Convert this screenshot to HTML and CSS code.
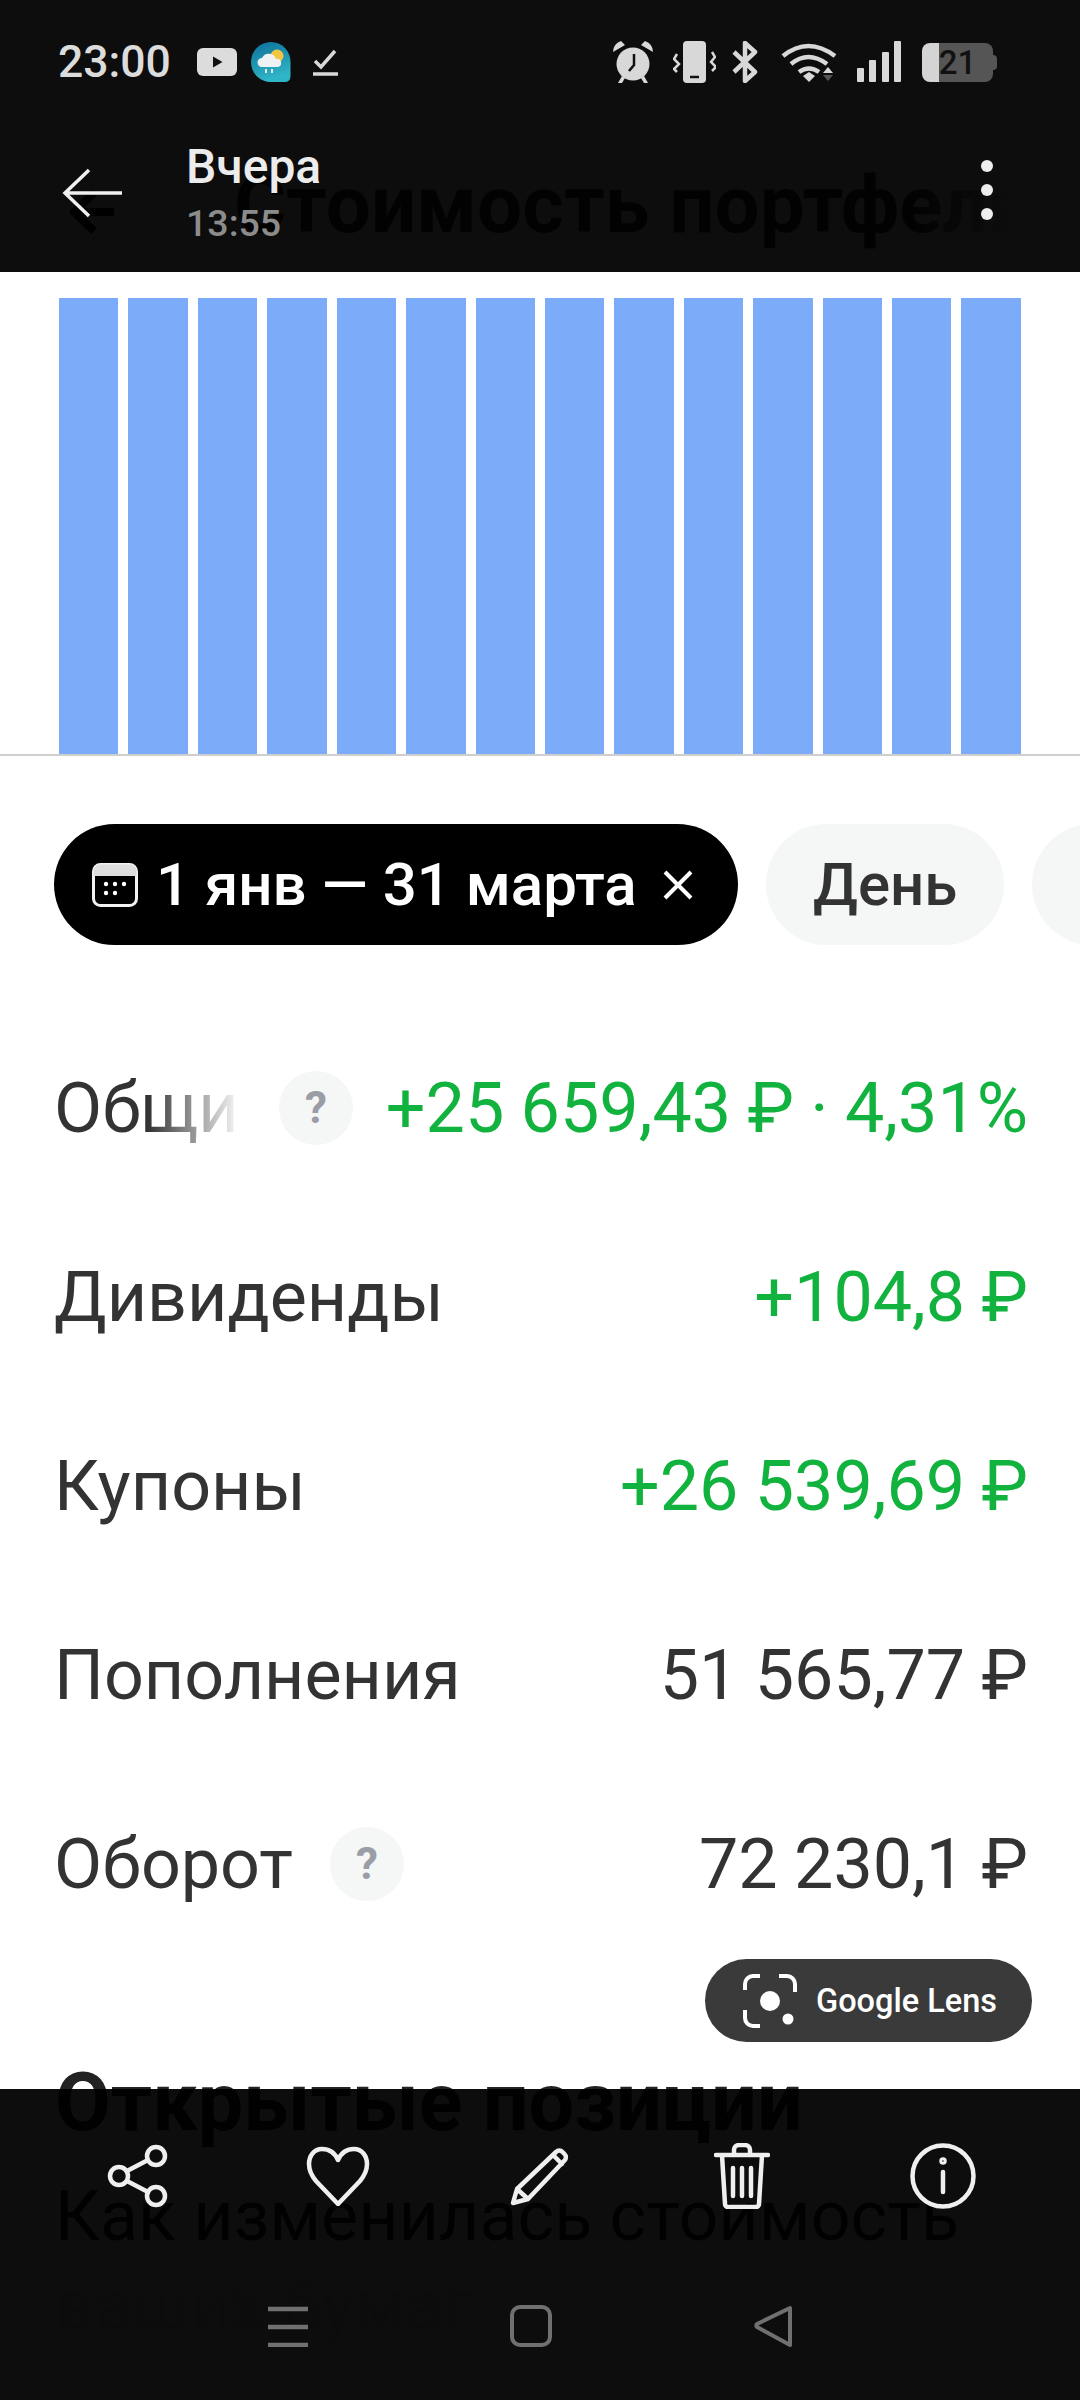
FILE: index.html
```html
<!DOCTYPE html>
<html lang="ru">

<head>
    <meta charset="UTF-8" />
    <meta name="viewport" content="width=device-width, initial-scale=1.0" />
    <title>Стоимость портфеля</title>
    <link rel="stylesheet" href="styles.css">
</head>

<body>
    <div class="screen">
        <main class="page">
            <div class="page-head">
                <svg class="page-back" viewBox="0 0 44 44">
                    <path d="M24 3 4 22l20 19M4 22h40" />
                </svg>
                <h1 class="page-title">Стоимость портфеля</h1>
            </div>

            <div class="chart">
                <div class="bar"></div><div class="bar"></div><div class="bar"></div><div class="bar"></div>
                <div class="bar"></div><div class="bar"></div><div class="bar"></div><div class="bar"></div>
                <div class="bar"></div><div class="bar"></div><div class="bar"></div><div class="bar"></div>
                <div class="bar"></div><div class="bar"></div>
            </div>

            <div class="chips">
                <div class="chip chip-active">
                    <svg class="chip-calendar" viewBox="0 0 46 44">
                        <rect x="1.5" y="1.5" width="43" height="41" rx="7" class="cal-frame" />
                        <path d="M1.5 13V8.5a7 7 0 0 1 7-7h29a7 7 0 0 1 7 7V13z" class="cal-top" />
                        <circle cx="14" cy="21" r="2.2" /><circle cx="23" cy="21" r="2.2" /><circle cx="32" cy="21" r="2.2" />
                        <circle cx="14" cy="30" r="2.2" /><circle cx="23" cy="30" r="2.2" />
                    </svg>
                    <span>1 янв — 31 марта</span>
                    <svg class="chip-close" viewBox="0 0 30 30">
                        <path d="M2 2l26 26M28 2 2 28" />
                    </svg>
                </div>
                <div class="chip">День</div>
                <div class="chip">Неделя</div>
            </div>

            <section class="rows">
                <div class="row">
                    <span class="row-label row-label-fade">Общий результат</span>
                    <span class="help">?</span>
                    <span class="row-value plus">+25 659,43 ₽ · 4,31%</span>
                </div>
                <div class="row">
                    <span class="row-label">Дивиденды</span>
                    <span class="row-value plus">+104,8 ₽</span>
                </div>
                <div class="row">
                    <span class="row-label">Купоны</span>
                    <span class="row-value plus">+26 539,69 ₽</span>
                </div>
                <div class="row">
                    <span class="row-label">Пополнения</span>
                    <span class="row-value">51 565,77 ₽</span>
                </div>
                <div class="row">
                    <span class="row-label">Оборот</span>
                    <span class="help">?</span>
                    <span class="row-value">72 230,1 ₽</span>
                </div>
            </section>

            <h2 class="section-title">Открытые позиции</h2>
            <p class="section-text">Как изменилась стоимость</p>
            <p class="section-text section-text-faint">ваших бумаг</p>
        </main>

        <!-- gallery viewer controls sit on top of the page -->
        <header class="top-bar">
            <div class="status-bar">
                <span class="status-time">23:00</span>
                <svg class="ic-yt" viewBox="0 0 40 28">
                    <rect width="40" height="28" rx="6" fill="#dcdcdc" />
                    <path d="M16 8.500v11l9.500-5.500z" fill="#111" />
                </svg>
                <svg class="ic-weather" viewBox="0 0 40 40">
                    <defs>
                        <linearGradient id="drop" x1="0" y1="0" x2="0.3" y2="1">
                            <stop offset="0" stop-color="#0c6f9a" />
                            <stop offset="1" stop-color="#2fb6c6" />
                        </linearGradient>
                    </defs>
                    <path d="M20 0a19.500 20 0 0 1 19.500 20v14q0 6-6 6H20A20 20 0 0 1 20 0z" fill="url(#drop)" />
                    <circle cx="26" cy="14" r="6.500" fill="#f4c542" />
                    <path d="M11 25a4.500 4.500 0 0 1 0-9 7.500 7.500 0 0 1 14 1 4 4 0 0 1 2 8z" fill="#eef2f4" />
                    <path d="M15 27v4M21 27v4" stroke="#dfe8ec" stroke-width="2" />
                </svg>
                <svg class="ic-check" viewBox="0 0 25 27">
                    <path d="M2 12l6 6L22 2" />
                    <path d="M0 25h25" />
                </svg>

                <div class="status-right">
                    <svg class="ic-alarm" viewBox="0 0 42 42">
                        <circle cx="21" cy="23" r="16.500" fill="#d8d8d8" />
                        <path d="M1 11Q1 3 9 0l4 4zM41 11q0-8-8-11l-4 4zM6 42l4-7 3 2-3 5zM36 42l-4-7-3 2 3 5z" fill="#d8d8d8" />
                        <path d="M22 13v11l-5 6" fill="none" stroke="#111" stroke-width="2.500" />
                    </svg>
                    <svg class="ic-vibrate" viewBox="0 0 43 42">
                        <rect x="10" y="0" width="23" height="42" rx="4" fill="#d8d8d8" />
                        <path d="M17 36h9" stroke="#111" stroke-width="2.500" />
                        <path d="M4 13 1 18l5 5-5 5 3 3M39 11l3 5-4 5 5 5-4 4" fill="none" stroke="#d8d8d8" stroke-width="2.500" />
                    </svg>
                    <svg class="ic-bt" viewBox="0 0 26 42">
                        <path d="M2 11l21 20-10 9V2l10 9L2 31" fill="none" stroke="#d8d8d8" stroke-width="4.500" stroke-linejoin="round" />
                    </svg>
                    <svg class="ic-wifi" viewBox="0 0 56 42">
                        <path d="M2 15q25-20 52 0M10 23q17-14 36 0M18 31q10-7 20 0" fill="none" stroke="#d8d8d8" stroke-width="4.500" />
                        <path d="M22 35l6-4 6 4-6 6z" fill="#d8d8d8" />
                        <path d="M47 26l5 6H42z" fill="#d8d8d8" />
                        <path d="M42 34h10l-5 6z" fill="#555" />
                    </svg>
                    <svg class="ic-signal" viewBox="0 0 44 42">
                        <rect x="0" y="27" width="7" height="14" rx="1" fill="#d8d8d8" />
                        <rect x="12" y="19" width="7" height="22" rx="1" fill="#d8d8d8" />
                        <rect x="25" y="11" width="7" height="30" rx="1" fill="#d8d8d8" />
                        <rect x="37" y="0" width="7" height="41" rx="1" fill="#d8d8d8" />
                    </svg>
                    <div class="battery">
                        <span class="battery-level">21</span>
                    </div>
                </div>
            </div>
            <div class="app-bar">
                <svg class="ic-back" viewBox="0 0 62 50">
                    <path d="M27 2 3 25l24 23M3 25h57" />
                </svg>
                <div class="app-title">
                    <div class="app-date">Вчера</div>
                    <div class="app-time">13:55</div>
                </div>
                <div class="dots"><i></i><i></i><i></i></div>
            </div>
        </header>

        <div class="lens">
            <svg class="lens-icon" viewBox="0 0 54 54">
                <path d="M2 16V10a8 8 0 0 1 8-8h7M36 2h8a8 8 0 0 1 8 8v8M2 36v8a8 8 0 0 0 8 8h7" />
                <circle cx="27" cy="27" r="10" class="lens-fill" />
                <circle cx="45" cy="45" r="5.500" class="lens-fill" />
            </svg>
            <span>Google Lens</span>
        </div>

        <footer class="bottom-bar">
            <div class="actions">
                <svg class="action" width="64" height="64" viewBox="0 0 64 64">
                    <circle cx="51" cy="12" r="9" /><circle cx="14" cy="32" r="9" /><circle cx="51" cy="52" r="9" />
                    <path d="M22 27l21-11M22 37l21 11" />
                </svg>
                <svg class="action" width="64" height="60" viewBox="0 0 64 60">
                    <path d="M32 14C28 5 21 3 16 3 8 3 3 10 3 18c0 6 2 11 7 17l22 23 22-23c5-6 7-11 7-17 0-8-5-15-13-15-5 0-12 2-16 11z" />
                </svg>
                <svg class="action" width="60" height="60" viewBox="0 0 60 60">
                    <path d="M3 57l4-14L46 6a4.500 4.500 0 0 1 6.500 0l2 2a4.500 4.500 0 0 1 0 6.500L18 53zM7 43l11 10M43 9l9 9" />
                </svg>
                <svg class="action" width="56" height="66" viewBox="0 0 56 66">
                    <path d="M2 12h52M20 11V7a5 5 0 0 1 5-5h6a5 5 0 0 1 5 5v4M8 12l3 49a3 3 0 0 0 3 3h28a3 3 0 0 0 3-3l3-49M19 25v28M28 25v28M37 25v28" />
                </svg>
                <svg class="action" width="66" height="66" viewBox="0 0 66 66">
                    <circle cx="33" cy="33" r="30.500" />
                    <path d="M33 29v20" />
                    <circle cx="33" cy="18" r="1.500" />
                </svg>
            </div>
            <nav class="nav-keys">
                <svg class="nav-key nav-menu" width="42" height="42" viewBox="0 0 42 42">
                    <path d="M1 4h40M1 22h40M1 40h40" />
                </svg>
                <svg class="nav-key" width="42" height="42" viewBox="0 0 42 42">
                    <rect x="2" y="2" width="38" height="38" rx="8" />
                </svg>
                <svg class="nav-key" width="42" height="42" viewBox="0 0 42 42">
                    <path d="M37 3 4 19a2 2 0 0 0 0 3l33 18z" stroke-linejoin="round" />
                </svg>
            </nav>
        </footer>
    </div>
</body>

</html>
```

FILE: styles.css
```css
* {
    box-sizing: border-box;
}

body {
    margin: 0;
    background-color: #fff;
    font-family: "Roboto", "Noto Sans", sans-serif;
}

.screen {
    position: relative;
    width: 1080px;
    height: 2400px;
    overflow: hidden;
    background-color: #fff;
}

/* page content */
.page-head {
    display: flex;
    align-items: flex-end;
    height: 298px;
    padding: 0 0 48px 70px;
    white-space: nowrap;
}

.page-back {
    width: 44px;
    height: 44px;
    margin-bottom: 16px;
    fill: none;
    stroke: #000;
    stroke-width: 8;
}

.page-title {
    flex: none;
    margin: 0 0 0 120px;
    font-size: 80px;
    line-height: 90px;
    font-weight: 700;
    color: #333;
    -webkit-mask-image: linear-gradient(to right, #000 85%, transparent 98%);
    mask-image: linear-gradient(to right, #000 85%, transparent 98%);
}

.chart {
    display: flex;
    gap: 10px;
    height: 458px;
    padding: 0 59px;
    border-bottom: 2px solid #cfcfcf;
}

.bar {
    flex: 1;
    background-color: #7cabf9;
}

.chips {
    display: flex;
    gap: 28px;
    margin-top: 68px;
    padding-left: 54px;
    white-space: nowrap;
}

.chip {
    flex: none;
    display: flex;
    align-items: center;
    height: 121px;
    padding: 0 47px;
    border-radius: 61px;
    background-color: #f5f6f6;
    color: #333;
    font-size: 60px;
    font-weight: 500;
}

.chip-active {
    gap: 18px;
    width: 684px;
    padding: 0 0 0 38px;
    background-color: #000;
    color: #fff;
}

.chip-calendar {
    flex: none;
    width: 46px;
    height: 44px;
    fill: #fff;
}

.cal-frame {
    fill: #000;
    stroke: #f2f2f2;
    stroke-width: 3;
}

.cal-top {
    fill: #dedede;
}

.chip-close {
    flex: none;
    width: 30px;
    height: 30px;
    margin-left: 8px;
    fill: none;
    stroke: #fff;
    stroke-width: 4;
}

.rows {
    margin-top: 68px;
    padding: 0 52px 0 54px;
}

.row {
    display: flex;
    align-items: center;
    height: 189px;
    font-size: 70px;
    color: #333;
    white-space: nowrap;
}

.row-label {
    flex: 0 1 auto;
    min-width: 0;
    overflow: hidden;
}

.row-label-fade {
    -webkit-mask-image: linear-gradient(to right, #000 50%, transparent 100%);
    mask-image: linear-gradient(to right, #000 50%, transparent 100%);
}

.help {
    flex: none;
    width: 74px;
    height: 74px;
    margin-left: 37px;
    border-radius: 50%;
    background-color: #f5f6f6;
    color: #9a9ca6;
    font-size: 44px;
    font-weight: 700;
    line-height: 74px;
    text-align: center;
}

.row-value {
    flex: none;
    margin-left: auto;
    padding-left: 33px;
    word-spacing: -1px;
}

.plus {
    color: #12b23f;
}

.section-title {
    margin: 100px 0 0;
    padding-left: 55px;
    font-size: 81px;
    line-height: 90px;
    font-weight: 700;
    color: #222;
    white-space: nowrap;
}

.section-text {
    margin: 28px 0 0;
    padding-left: 55px;
    font-size: 70px;
    line-height: 80px;
    color: #222;
    white-space: nowrap;
}

.section-text-faint {
    margin-top: 10px;
    color: #e2e2e2;
}

/* dark viewer chrome, the page shows through a little */
.top-bar,
.bottom-bar {
    position: absolute;
    left: 0;
    width: 100%;
    background-color: rgba(0, 0, 0, 0.95);
}

.top-bar {
    top: 0;
    height: 272px;
}

.status-bar {
    display: flex;
    align-items: center;
    height: 124px;
    padding-left: 58px;
}

.status-time {
    width: 139px;
    color: #dcdcdc;
    font-size: 44.500px;
    font-weight: 500;
}

.ic-yt {
    width: 40px;
    height: 28px;
}

.ic-weather {
    width: 40px;
    height: 40px;
    margin-left: 14px;
}

.ic-check {
    width: 25px;
    height: 27px;
    margin-left: 22px;
    fill: none;
    stroke: #d8d8d8;
    stroke-width: 3.500;
}

.status-right {
    display: flex;
    align-items: center;
    margin-left: auto;
    padding-right: 87px;
}

.ic-alarm {
    width: 42px;
    height: 42px;
}

.ic-vibrate {
    width: 43px;
    height: 42px;
    margin-left: 19px;
}

.ic-bt {
    width: 30px;
    height: 42px;
    margin-left: 14px;
}

.ic-wifi {
    width: 56px;
    height: 42px;
    margin-left: 21px;
}

.ic-signal {
    width: 44px;
    height: 42px;
    margin-left: 20px;
}

.battery {
    position: relative;
    width: 71px;
    height: 39px;
    margin-left: 21px;
    border-radius: 8px;
    background: linear-gradient(to right, #d4d4d4 24%, #555 24%);
    color: #111;
    font-size: 33px;
    font-weight: 500;
    line-height: 39px;
    text-align: center;
}

.battery::after {
    content: "";
    position: absolute;
    right: -4px;
    top: 12px;
    width: 4px;
    height: 15px;
    border-radius: 0 4px 4px 0;
    background-color: #555;
}

.app-bar {
    display: flex;
    align-items: center;
    height: 136px;
    padding-left: 62px;
    color: #fff;
}

.ic-back {
    width: 62px;
    height: 50px;
    margin-top: 2px;
    fill: none;
    stroke: #f0f0f0;
    stroke-width: 3.500;
}

.app-title {
    margin-left: 62px;
}

.app-date {
    font-size: 48px;
    line-height: 52px;
    font-weight: 500;
    color: #ececec;
}

.app-time {
    margin-top: 10px;
    font-size: 37.500px;
    line-height: 40px;
    font-weight: 500;
    color: #8c8c8c;
}

.dots {
    display: flex;
    flex-direction: column;
    gap: 12px;
    margin-left: auto;
    margin-top: -4px;
    padding-right: 87px;
}

.dots i {
    display: block;
    width: 12px;
    height: 12px;
    border-radius: 50%;
    background-color: #eee;
}

.lens {
    position: absolute;
    left: 705px;
    top: 1959px;
    display: flex;
    align-items: center;
    gap: 19px;
    width: 327px;
    height: 83px;
    padding-left: 38px;
    border-radius: 42px;
    background-color: #3a3a3a;
    color: #fff;
    font-size: 32.500px;
    font-weight: 500;
}

.lens-icon {
    flex: none;
    width: 54px;
    height: 54px;
    fill: none;
    stroke: #fff;
    stroke-width: 4;
}

.lens-fill {
    fill: #fff;
    stroke: none;
}

.bottom-bar {
    top: 2089px;
    height: 311px;
}

.actions {
    display: grid;
    grid-template-columns: repeat(5, 1fr);
    justify-items: center;
    align-items: center;
    height: 174px;
    padding: 0 36px;
}

.action {
    fill: none;
    stroke: #efefef;
    stroke-width: 4.500;
    stroke-linecap: round;
    stroke-linejoin: round;
}

.nav-keys {
    display: grid;
    grid-template-columns: repeat(3, 243px);
    justify-content: center;
    justify-items: center;
    margin-top: 42px;
    padding-right: 18px;
}

.nav-key {
    fill: none;
    stroke: #707070;
    stroke-width: 4;
}

.nav-menu {
    stroke-width: 4.500;
}
```
